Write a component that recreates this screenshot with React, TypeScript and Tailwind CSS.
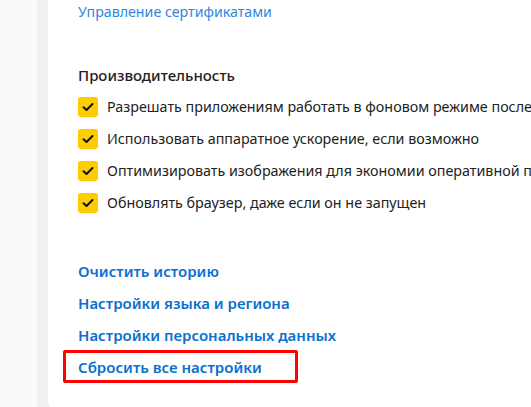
import React from "react";

const perf = [
  "Разрешать приложениям работать в фоновом режиме после",
  "Использовать аппаратное ускорение, если возможно",
  "Оптимизировать изображения для экономии оперативной памяти",
  "Обновлять браузер, даже если он не запущен",
];

const links = [
  "Очистить историю",
  "Настройки языка и региона",
  "Настройки персональных данных",
];

function Check() {
  return (
    <span className="w-[20px] h-[20px] shrink-0 rounded-[3px] bg-[#ffcc00] flex items-center justify-center">
      <svg width="12" height="10" viewBox="0 0 12 10" fill="none">
        <path d="M1.5 5.2 4.5 8 10.5 2" stroke="#111" strokeWidth="2" strokeLinecap="round" strokeLinejoin="round" />
      </svg>
    </span>
  );
}

export default function App() {
  return (
    <div
      className="w-[531px] h-[407px] overflow-hidden flex bg-[#f0f0f0]"
      style={{ fontFamily: '"Noto Sans", "Open Sans", sans-serif' }}
    >
      <div className="w-[37px] shrink-0 bg-[#fafafa]" />
      <div className="flex-1 pl-[11px]">
        <div className="bg-white h-[416px] rounded-bl-[16px] pl-[30px] whitespace-nowrap overflow-hidden text-[15px]">
          <div className="h-[24px] flex items-center text-[14.2px] text-[#2f86e0]">Управление сертификатами</div>

          <div className="mt-[35px] h-[32px] flex items-center text-[#222] font-medium">Производительность</div>
          {perf.map((t) => (
            <div key={t} className="h-[32px] flex items-center gap-[9px] text-[14.3px] text-[#222]">
              <Check />
              <span>{t}</span>
            </div>
          ))}

          <div className="mt-[36px]">
            {links.map((t) => (
              <div key={t} className="h-[32px] flex items-center text-[#0b6fd0] font-semibold">
                {t}
              </div>
            ))}
            <div className="relative h-[32px] flex items-center text-[#0b6fd0] font-semibold">
              Сбросить все настройки
              <div className="absolute left-[-15px] top-[-1px] w-[235px] h-[33px] border-[3px] border-[#ff0000] rounded-[2px]" />
            </div>
          </div>
        </div>
      </div>
    </div>
  );
}
